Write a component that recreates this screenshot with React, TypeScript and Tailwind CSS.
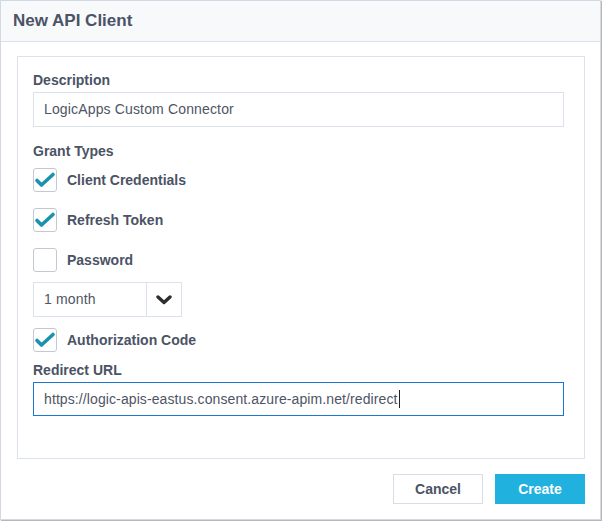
import React from "react";

const Check = () => (
  <svg width="24" height="24" viewBox="0 0 24 24" className="absolute left-[-1px] top-[-1px]">
    <polyline points="4,12.5 8.5,17 20,6.5" fill="none" stroke="#1a92ad" strokeWidth="3.6" strokeLinecap="round" strokeLinejoin="round" />
  </svg>
);

function Row({ label, checked }: { label: string; checked: boolean }) {
  return (
    <div className="flex items-center h-[24px]">
      <div className="relative w-[24px] h-[24px] rounded-[3px] border border-[#c3c9d2] bg-white">
        {checked && <Check />}
      </div>
      <span className="ml-[10px] text-[14px] font-bold text-[#4b5365] leading-[20px]">{label}</span>
    </div>
  );
}

export default function App() {
  return (
    <div className="w-[602px] h-[521px] bg-white" style={{ fontFamily: '"Liberation Sans", Arial, sans-serif' }}>
      <div className="w-[601px] h-[520px] border border-[#d3d9e3] shadow-[1px_1px_1px_rgba(0,0,0,0.28)] flex flex-col bg-white">
        <div className="h-[41px] bg-[#f7f9fb] border-b border-[#dce2eb] flex items-center pl-[12px]">
          <span className="text-[17px] font-bold text-[#4b5365] leading-[20px]">New API Client</span>
        </div>
        <div className="pl-[16px] pt-[14px]">
          <div className="w-[568px] border border-[#dce2eb] pl-[15px] pt-[13px] pb-[42px] flex flex-col">
            <div className="text-[14px] font-bold text-[#4b5365] leading-[20px]">Description</div>
            <div className="mt-[2px] w-[531px] h-[35px] border border-[#dce2eb] flex items-center pl-[10px] text-[14px] tracking-[0.15px] text-[#4e5565]">
              LogicApps Custom Connector
            </div>
            <div className="mt-[14px] text-[14px] font-bold text-[#4b5365] leading-[20px]">Grant Types</div>
            <div className="mt-[7px] flex flex-col gap-[16px]">
              <Row label="Client Credentials" checked />
              <Row label="Refresh Token" checked />
              <Row label="Password" checked={false} />
            </div>
            <div className="mt-[10px] w-[149px] h-[35px] border border-[#dce2eb] flex">
              <div className="w-[113px] border-r border-[#dce2eb] flex items-center pl-[10px] text-[14px] tracking-[0.15px] text-[#4e5565]">
                1 month
              </div>
              <div className="flex-1 flex items-center justify-center">
                <svg width="16" height="10" viewBox="0 0 16 10">
                  <polyline points="2,2 8,7.5 14,2" fill="none" stroke="#2e2e2e" strokeWidth="3.4" strokeLinecap="round" strokeLinejoin="round" />
                </svg>
              </div>
            </div>
            <div className="mt-[11px]">
              <Row label="Authorization Code" checked />
            </div>
            <div className="mt-[8px] text-[14px] font-bold text-[#4b5365] leading-[20px]">Redirect URL</div>
            <div className="mt-[2px] w-[531px] h-[34px] border border-[#1a78d2] flex items-center pl-[10px] text-[14px] tracking-[0.1px] text-[#4e5565]">
              <span>https://logic-apis-eastus.consent.azure-apim.net/redirect</span>
              <span className="ml-[1px] w-[1px] h-[18px] bg-[#222]"></span>
            </div>
          </div>
          <div className="w-[568px] mt-[15px] flex justify-end gap-[12px]">
            <button className="w-[90px] h-[30px] border border-[#d7dde7] bg-white text-[14px] font-bold text-[#4b5365]">Cancel</button>
            <button className="w-[90px] h-[30px] bg-[#20b1de] text-[14px] font-bold text-white">Create</button>
          </div>
        </div>
      </div>
    </div>
  );
}
